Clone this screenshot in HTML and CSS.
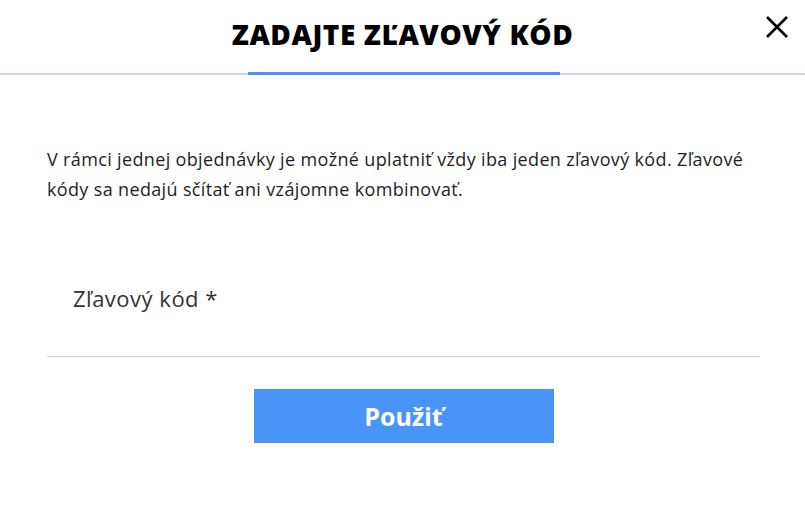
FILE: index.html
```html
<!DOCTYPE html>
<html lang="sk">
<head>
  <meta charset="UTF-8">
  <meta name="viewport" content="width=device-width, initial-scale=1.0">
  <title>Zľavový kód</title>
  <link rel="stylesheet" href="styles.css">
</head>
<body>
  <div class="modal">
    <div class="modal-header">
      <h2 class="modal-title">ZADAJTE ZĽAVOVÝ KÓD</h2>
      <button class="close-btn" type="button" aria-label="Zavrieť">
        <svg width="24" height="24" viewBox="0 0 24 24">
          <path d="M2 2 L22 22 M22 2 L2 22" stroke="#000" stroke-width="2.6" fill="none"/>
        </svg>
      </button>
    </div>

    <div class="modal-body">
      <p class="info">V rámci jednej objednávky je možné uplatniť vždy iba jeden zľavový kód. Zľavové kódy sa nedajú sčítať ani vzájomne kombinovať.</p>

      <form id="couponForm">
        <div class="field">
          <label for="coupon">Zľavový kód *</label>
          <input type="text" id="coupon" required />
        </div>
        <button type="submit" class="submit-btn">Použiť</button>
      </form>
    </div>
  </div>
</body>
</html>
```

FILE: styles.css
```css
body {
  margin: 0;
  font-family: "Open Sans", Arial, sans-serif;
  color: #222;
  background: #fff;
}

.modal-header {
  position: relative;
  height: 67px;
  padding-bottom: 6px;
  border-bottom: 2px solid #cbd4f4;
  display: flex;
  justify-content: center;
  align-items: center;
}

.modal-title {
  margin: 0;
  font-size: 28px;
  font-weight: 800;
  color: #000;
  letter-spacing: 0.6px;
}

/* blue tab under the title */
.modal-header::after {
  content: "";
  position: absolute;
  left: 248px;
  width: 312px;
  bottom: -2px;
  height: 3px;
  background: #4a94f8;
}

.close-btn {
  position: absolute;
  top: 15px;
  right: 16px;
  padding: 0;
  border: none;
  background: none;
  cursor: pointer;
}

.modal-body {
  padding: 0 45px 0 47px;
}

.info {
  margin: 69px 0 0;
  font-size: 18px;
  line-height: 30px;
  letter-spacing: 0.35px;
  color: #1e1e1e;
}

.field {
  margin-top: 79px;
  border-bottom: 1px solid #d0d0d0;
  padding: 0 0 0 26px;
  height: 73px;
}

.field label {
  display: block;
  font-size: 22px;
  color: #333;
  line-height: 30px;
  letter-spacing: 0.5px;
}

.field input {
  border: none;
  outline: none;
  width: 100%;
  font-size: 18px;
  background: transparent;
}

.submit-btn {
  display: block;
  margin: 32px auto 0;
  width: 300px;
  height: 54px;
  border: none;
  background: #4a94f8;
  color: #fff;
  font-family: "Open Sans", Arial, sans-serif;
  font-size: 25px;
  font-weight: 700;
  cursor: pointer;
}
```
